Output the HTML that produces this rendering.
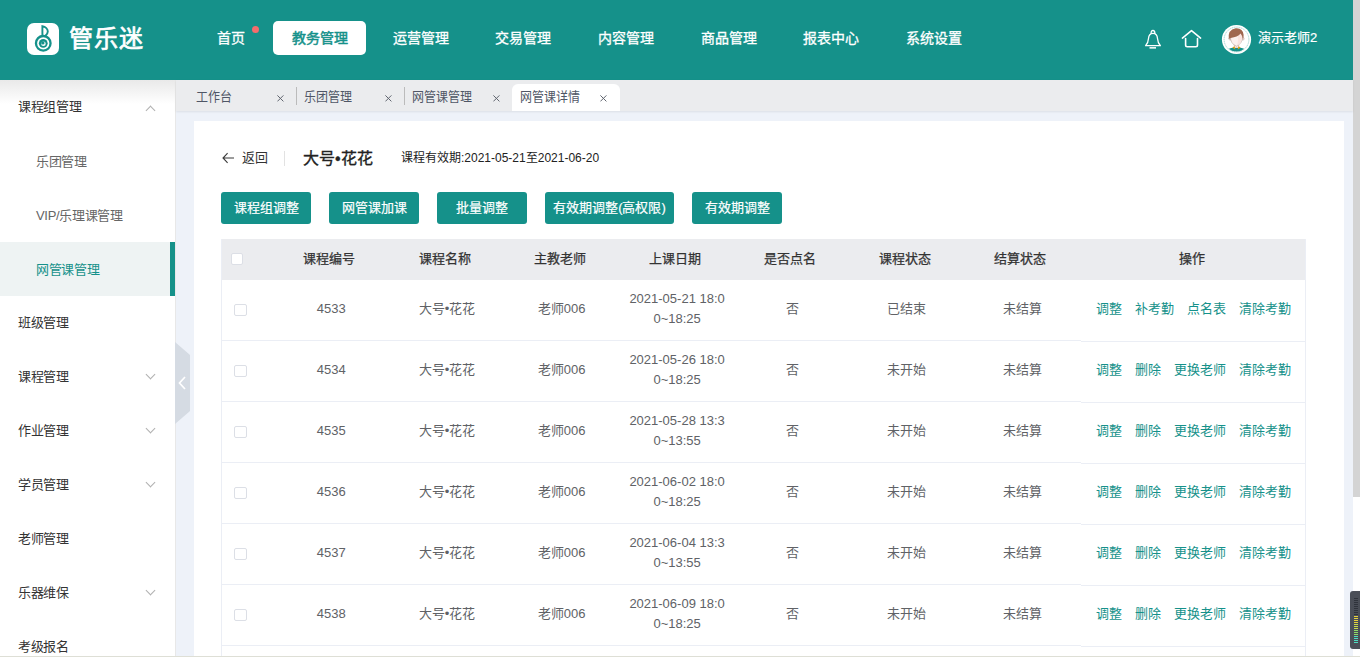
<!DOCTYPE html>
<html lang="zh-CN">
<head>
<meta charset="utf-8">
<style>
*{margin:0;padding:0;box-sizing:border-box}
html,body{width:1360px;height:657px;overflow:hidden}
body{position:relative;background:#eef2f9;font-family:"Liberation Sans",sans-serif;color:#333;font-size:13px}
.abs{position:absolute}
#hdr{left:0;top:0;width:1353px;height:80px;background:#15918a}
.logo{left:27px;top:23px;width:32px;height:32px;background:#fff;border-radius:7px}
.logo svg{position:absolute;left:0;top:0}
.brand{left:69px;top:23px;color:#fff;font-size:24px;letter-spacing:1px;line-height:32px;-webkit-text-stroke:.7px #fff}
.nav{top:21px;height:34px;line-height:34px;color:#fff;font-size:14px;font-weight:400;-webkit-text-stroke:.3px currentColor;white-space:nowrap}
.nav.act{background:#fff;color:#15918a;border-radius:5px;text-align:center;-webkit-text-stroke:.5px #15918a}
.dot{left:252px;top:26px;width:7px;height:7px;border-radius:50%;background:#f56c6c}
.uname{left:1258px;top:30px;color:#fff;font-size:13px;line-height:16px;-webkit-text-stroke:.2px #fff}
#sb{left:1353px;top:0;width:7px;height:497px;background:#d4d4d4}
#sbt{left:1353px;top:497px;width:7px;height:160px;background:#fff}
#widget{left:1350px;top:591px;width:14px;height:58px;background:#4a4e57;border-radius:3px}
#side{left:0;top:80px;width:176px;height:577px;background:#fff;border-right:1px solid #e8e8e8}
#side .shadow{left:0;top:0;width:175px;height:24px;background:linear-gradient(#e9e9e9,rgba(255,255,255,0))}
.mi{left:18px;font-size:13px;color:#333;line-height:16px;white-space:nowrap;letter-spacing:-.3px;margin-top:.5px}
.mi.sub{left:36px;color:#666}
.mi.on{color:#15918a}
.chev{left:147px;width:7px;height:7px;border-right:1px solid #b0b0b0;border-bottom:1px solid #b0b0b0;transform:rotate(45deg);margin-top:.5px}
.chev.up{transform:rotate(-135deg)}
#tabs{left:176px;top:80px;width:1177px;height:31px;background:#ebecee;box-shadow:0 1px 2px rgba(0,0,0,.08)}
.tab{top:0;height:31px;width:108px;font-size:12px;color:#4f5666;line-height:31px;white-space:nowrap}
.tab .t{position:absolute;left:8px;top:2px;transform:scaleY(1.08);transform-origin:50% 60%}
.tab .x{position:absolute;left:88.6px;top:14.6px}
.tab .sep{position:absolute;left:0;top:7px;width:1px;height:18px;background:#bbb}
.tab.act{top:4px;height:27px;background:#fff;border-radius:6px 6px 0 0}
.tab.act .t{top:-2px}
.tab.act .x{top:10.6px;left:87.6px}
#card{left:194px;top:121px;width:1150px;height:540px;background:#fff}
.back{left:242px;top:150px;font-size:13px;line-height:16px;color:#333}
.title{left:303px;top:148px;font-size:16px;line-height:22px;color:#222;-webkit-text-stroke:.35px #222}
.period{left:401px;top:150px;font-size:12px;line-height:16px;color:#222}
.btn{top:192px;height:32px;line-height:32px;background:#15918a;color:#fff;border-radius:3px;text-align:center;font-size:13px;white-space:nowrap;-webkit-text-stroke:.2px #fff}
#tbl{left:221px;top:239px;width:1085px;height:420px;border-left:1px solid #ebeef5;border-right:1px solid #ebeef5}
.th{left:0;top:0;width:1083px;height:41px;background:#ebecef}
.c{position:absolute;text-align:center;white-space:nowrap}
.hd{color:#333;line-height:18px;-webkit-text-stroke:.25px #333}
.rowb{left:0;width:859px;height:1px;background:#ebeef5}
.rowbf{left:859px;width:224px;height:1px;background:#ebeef5}
.cb{position:absolute;width:13px;height:12px;border:1px solid #dcdfe6;border-radius:2px;background:#fff}
.hcb{width:12px;height:12px}
.cell{color:#606266;line-height:20px}
.ops{color:#15918a;line-height:20px}
.ops span{margin:0 6.5px}

</style>
</head>
<body>
<div id="hdr" class="abs">
<div class="abs logo"><svg width="32" height="32" viewBox="0 0 32 32"><g fill="none" stroke="#15918a"><circle cx="16.25" cy="20.3" r="7.3" stroke-width="2.3"/><path d="M15.4 12.6 V3.2 C18.6 3.6 20.8 6 20.8 8.6 C20.8 10.4 19.8 11.8 18.4 12.7" stroke-width="1.9"/></g><circle cx="16.25" cy="20.3" r="4.4" fill="#15918a"/><circle cx="16.4" cy="20.8" r="2.3" fill="#fff"/><circle cx="15.85" cy="19.9" r="1.7" fill="#15918a"/></svg></div>
<div class="abs brand">管乐迷</div>
<div class="abs nav" style="left:217px">首页</div>
<div class="abs dot"></div>
<div class="abs nav act" style="left:273px;width:93px">教务管理</div>
<div class="abs nav" style="left:393px">运营管理</div>
<div class="abs nav" style="left:495px">交易管理</div>
<div class="abs nav" style="left:598px">内容管理</div>
<div class="abs nav" style="left:701px">商品管理</div>
<div class="abs nav" style="left:803px">报表中心</div>
<div class="abs nav" style="left:906px">系统设置</div>
<svg class="abs" style="left:1140px;top:28px" width="26" height="24" viewBox="0 0 26 24"><g fill="none" stroke="#fff" stroke-width="1.3" stroke-linejoin="round"><path d="M11.1 5.4 Q11.1 2.5 13 2.5 Q14.9 2.5 14.9 5.4"/><path d="M13 5.3 C9.8 5.3 8.7 7.5 8.5 10.5 C8.3 14 7.6 15.6 5.6 17.7 H20.4 C18.4 15.6 17.7 14 17.5 10.5 C17.3 7.5 16.2 5.3 13 5.3 Z"/></g><rect x="9.5" y="19.1" width="6.5" height="1.5" fill="#fff"/></svg>
<svg class="abs" style="left:1178px;top:27px" width="26" height="24" viewBox="0 0 26 24"><g fill="none" stroke="#fff" stroke-width="1.6" stroke-linejoin="round" stroke-linecap="round"><path d="M4.4 11.1 L13.5 3.6 L22.6 11.1"/><path d="M7.6 11.6 V18 Q7.6 19.7 9.3 19.7 H17.8 Q19.5 19.7 19.5 18 V11.6"/></g></svg>
<svg class="abs" style="left:1221px;top:24px" width="31" height="31" viewBox="0 0 31 31"><circle cx="15.5" cy="15.5" r="14.6" fill="#fff"/><circle cx="15.5" cy="15.5" r="12.4" fill="none" stroke="#6fbab3" stroke-width=".6" stroke-dasharray="1.3 .6"/><clipPath id="av"><circle cx="15.5" cy="15.5" r="12"/></clipPath><g clip-path="url(#av)"><path d="M4 31 Q5 24.6 11.5 23.8 L19.5 23.8 Q26 24.6 27 31 Z" fill="#15918a"/><path d="M13.3 18.5 V24 H17.7 V18.5 Z" fill="#fbe7e3" stroke="#8a6a60" stroke-width=".3"/><path d="M11.3 23.6 L13.5 22.2 L14.3 25.6 Z M19.7 23.6 L17.5 22.2 L16.7 25.6 Z" fill="#e0a010"/><circle cx="9.1" cy="14.8" r="1.3" fill="#fbe7e3" stroke="#8a6a60" stroke-width=".3"/><circle cx="21.9" cy="14.8" r="1.3" fill="#fbe7e3" stroke="#8a6a60" stroke-width=".3"/><path d="M9.4 12.5 Q9.2 19.6 15.4 22.2 Q21.6 19.6 21.4 12.5 Q21.3 7.5 15.4 7.5 Q9.5 7.5 9.4 12.5 Z" fill="#fdf0ee" stroke="#8a6a60" stroke-width=".35"/><path d="M15.4 8 Q21 8.5 21.2 13 Q21 19 15.6 22 Q18.5 16 15.4 8 Z" fill="#fbe3df"/><path d="M7.8 15 Q6.6 5.6 14.6 4.2 Q21.8 3.6 22.6 10.8 Q22.8 13 22 15.2 Q21.2 11.6 19.6 9.6 Q16.4 13.2 9.8 14 Q8.6 14.4 7.8 15 Z" fill="#a0674f"/></g></svg>
<div class="abs uname">演示老师2</div>
</div>
<div id="sb" class="abs"></div>
<div id="sbt" class="abs"></div>
<div id="widget" class="abs"><div class="abs" style="left:4px;top:7px;width:4px;height:1px;background:#2f333b"></div><div class="abs" style="left:4px;top:9px;width:4px;height:1px;background:#2f333b"></div><div class="abs" style="left:4px;top:11px;width:4px;height:1px;background:#2f333b"></div><div class="abs" style="left:4px;top:13px;width:4px;height:1px;background:#2f333b"></div><div class="abs" style="left:4px;top:15px;width:4px;height:1px;background:#2f333b"></div><div class="abs" style="left:4px;top:17px;width:4px;height:1px;background:#2f333b"></div><div class="abs" style="left:4px;top:19px;width:4px;height:1px;background:#2f333b"></div><div class="abs" style="left:4px;top:21px;width:4px;height:1px;background:#2f333b"></div><div class="abs" style="left:4px;top:23px;width:4px;height:1px;background:#2f333b"></div><div class="abs" style="left:4px;top:25px;width:4px;height:1px;background:#e8d33a"></div><div class="abs" style="left:4px;top:27px;width:4px;height:1px;background:#e8d33a"></div><div class="abs" style="left:4px;top:29px;width:4px;height:1px;background:#e8d33a"></div><div class="abs" style="left:4px;top:31px;width:4px;height:1px;background:#e8d33a"></div><div class="abs" style="left:4px;top:33px;width:4px;height:1px;background:#c9dc4a"></div><div class="abs" style="left:4px;top:35px;width:4px;height:1px;background:#c9dc4a"></div><div class="abs" style="left:4px;top:37px;width:4px;height:1px;background:#c9dc4a"></div><div class="abs" style="left:4px;top:39px;width:4px;height:1px;background:#8fdc66"></div><div class="abs" style="left:4px;top:41px;width:4px;height:1px;background:#8fdc66"></div><div class="abs" style="left:4px;top:43px;width:4px;height:1px;background:#8fdc66"></div><div class="abs" style="left:4px;top:45px;width:4px;height:1px;background:#4fdcc0"></div><div class="abs" style="left:4px;top:47px;width:4px;height:1px;background:#4fdcc0"></div><div class="abs" style="left:4px;top:49px;width:4px;height:1px;background:#4fdcc0"></div><div class="abs" style="left:4px;top:51px;width:4px;height:1px;background:#4fdcc0"></div></div>
<div id="side" class="abs"><div class="abs shadow"></div>
<div class="abs mi top" style="top:18px">课程组管理</div><div class="abs chev up" style="top:26px"></div>
<div class="abs mi sub" style="top:73px">乐团管理</div>
<div class="abs mi sub" style="top:127px">VIP/乐理课管理</div>
<div class="abs" style="left:0;top:162px;width:175px;height:54px;background:#eef3f3"></div><div class="abs" style="left:170px;top:162px;width:5px;height:54px;background:#15918a"></div><div class="abs mi sub on" style="top:181px">网管课管理</div>
<div class="abs mi top" style="top:234px">班级管理</div>
<div class="abs mi top" style="top:288px">课程管理</div><div class="abs chev" style="top:290px"></div>
<div class="abs mi top" style="top:342px">作业管理</div><div class="abs chev" style="top:344px"></div>
<div class="abs mi top" style="top:396px">学员管理</div><div class="abs chev" style="top:398px"></div>
<div class="abs mi top" style="top:450px">老师管理</div>
<div class="abs mi top" style="top:504px">乐器维保</div><div class="abs chev" style="top:506px"></div>
<div class="abs mi top" style="top:558px">考级报名</div>
</div>
<svg class="abs" style="left:175px;top:342px" width="16" height="83" viewBox="0 0 16 83"><path d="M0 0 L15 13 V69 L0 82 Z" fill="#d5dbe3"/><path d="M10 35 L4.5 41 L10 47" fill="none" stroke="#fff" stroke-width="1.7"/></svg>
<div id="tabs" class="abs">
<div class="abs tab" style="left:12px"><span class="t">工作台</span><svg class="x" width="7" height="7" viewBox="0 0 7 7"><path d="M.4 .4 L6.4 6.4 M6.4 .4 L.4 6.4" stroke="#60656f" stroke-width="1"/></svg></div>
<div class="abs tab" style="left:120px"><span class="sep"></span><span class="t">乐团管理</span><svg class="x" width="7" height="7" viewBox="0 0 7 7"><path d="M.4 .4 L6.4 6.4 M6.4 .4 L.4 6.4" stroke="#60656f" stroke-width="1"/></svg></div>
<div class="abs tab" style="left:228px"><span class="sep"></span><span class="t">网管课管理</span><svg class="x" width="7" height="7" viewBox="0 0 7 7"><path d="M.4 .4 L6.4 6.4 M6.4 .4 L.4 6.4" stroke="#60656f" stroke-width="1"/></svg></div>
<div class="abs tab act" style="left:336px"><span class="t">网管课详情</span><svg class="x" width="7" height="7" viewBox="0 0 7 7"><path d="M.4 .4 L6.4 6.4 M6.4 .4 L.4 6.4" stroke="#60656f" stroke-width="1"/></svg></div>
</div>
<div id="card" class="abs"></div>
<svg class="abs" style="left:221px;top:151px" width="14" height="14" viewBox="0 0 14 14"><path d="M13 7 H2.2 M6.6 2.2 L2 7 L6.6 11.8" fill="none" stroke="#3a3a3a" stroke-width="1.1"/></svg>
<div class="abs back">返回</div>
<div class="abs" style="left:284px;top:151px;width:1px;height:15px;background:#e2e2e2"></div>
<div class="abs title">大号•花花</div>
<div class="abs period">课程有效期:2021-05-21至2021-06-20</div>
<div class="abs btn" style="left:221px;width:90px">课程组调整</div>
<div class="abs btn" style="left:329px;width:90px">网管课加课</div>
<div class="abs btn" style="left:437px;width:90px">批量调整</div>
<div class="abs btn" style="left:545px;width:129px">有效期调整(高权限)</div>
<div class="abs btn" style="left:692px;width:90px">有效期调整</div>
<div id="tbl" class="abs">
<div class="abs th"></div>
<div class="abs cb hcb" style="left:9px;top:14px"></div>
<div class="c hd" style="left:47.2px;width:120px;top:11px">课程编号</div>
<div class="c hd" style="left:162.8px;width:120px;top:11px">课程名称</div>
<div class="c hd" style="left:278.2px;width:120px;top:11px">主教老师</div>
<div class="c hd" style="left:392.5px;width:120px;top:11px">上课日期</div>
<div class="c hd" style="left:508.2px;width:120px;top:11px">是否点名</div>
<div class="c hd" style="left:622.6px;width:120px;top:11px">课程状态</div>
<div class="c hd" style="left:738.1px;width:120px;top:11px">结算状态</div>
<div class="c hd" style="left:910.2px;width:120px;top:11px">操作</div>
<div class="abs rowb" style="top:101px"></div><div class="abs rowbf" style="top:102px"></div><div class="abs cb" style="left:12px;top:65px"></div><div class="c cell" style="left:49.2px;width:120px;top:60px">4533</div><div class="c cell" style="left:165.1px;width:120px;top:60px">大号•花花</div><div class="c cell" style="left:279.6px;width:120px;top:60px">老师006</div><div class="c cell" style="left:385.1px;width:140px;top:50px">2021-05-21 18:0<br>0~18:25</div><div class="c cell" style="left:510.0px;width:120px;top:60px">否</div><div class="c cell" style="left:624.8px;width:120px;top:60px">已结束</div><div class="c cell" style="left:740.0px;width:120px;top:60px">未结算</div><div class="c ops" style="left:858.5px;width:225px;top:60px"><span>调整</span><span>补考勤</span><span>点名表</span><span>清除考勤</span></div>
<div class="abs rowb" style="top:162px"></div><div class="abs rowbf" style="top:163px"></div><div class="abs cb" style="left:12px;top:126px"></div><div class="c cell" style="left:49.2px;width:120px;top:121px">4534</div><div class="c cell" style="left:165.1px;width:120px;top:121px">大号•花花</div><div class="c cell" style="left:279.6px;width:120px;top:121px">老师006</div><div class="c cell" style="left:385.1px;width:140px;top:111px">2021-05-26 18:0<br>0~18:25</div><div class="c cell" style="left:510.0px;width:120px;top:121px">否</div><div class="c cell" style="left:624.8px;width:120px;top:121px">未开始</div><div class="c cell" style="left:740.0px;width:120px;top:121px">未结算</div><div class="c ops" style="left:858.5px;width:225px;top:121px"><span>调整</span><span>删除</span><span>更换老师</span><span>清除考勤</span></div>
<div class="abs rowb" style="top:223px"></div><div class="abs rowbf" style="top:224px"></div><div class="abs cb" style="left:12px;top:187px"></div><div class="c cell" style="left:49.2px;width:120px;top:182px">4535</div><div class="c cell" style="left:165.1px;width:120px;top:182px">大号•花花</div><div class="c cell" style="left:279.6px;width:120px;top:182px">老师006</div><div class="c cell" style="left:385.1px;width:140px;top:172px">2021-05-28 13:3<br>0~13:55</div><div class="c cell" style="left:510.0px;width:120px;top:182px">否</div><div class="c cell" style="left:624.8px;width:120px;top:182px">未开始</div><div class="c cell" style="left:740.0px;width:120px;top:182px">未结算</div><div class="c ops" style="left:858.5px;width:225px;top:182px"><span>调整</span><span>删除</span><span>更换老师</span><span>清除考勤</span></div>
<div class="abs rowb" style="top:284px"></div><div class="abs rowbf" style="top:285px"></div><div class="abs cb" style="left:12px;top:248px"></div><div class="c cell" style="left:49.2px;width:120px;top:243px">4536</div><div class="c cell" style="left:165.1px;width:120px;top:243px">大号•花花</div><div class="c cell" style="left:279.6px;width:120px;top:243px">老师006</div><div class="c cell" style="left:385.1px;width:140px;top:233px">2021-06-02 18:0<br>0~18:25</div><div class="c cell" style="left:510.0px;width:120px;top:243px">否</div><div class="c cell" style="left:624.8px;width:120px;top:243px">未开始</div><div class="c cell" style="left:740.0px;width:120px;top:243px">未结算</div><div class="c ops" style="left:858.5px;width:225px;top:243px"><span>调整</span><span>删除</span><span>更换老师</span><span>清除考勤</span></div>
<div class="abs rowb" style="top:345px"></div><div class="abs rowbf" style="top:346px"></div><div class="abs cb" style="left:12px;top:309px"></div><div class="c cell" style="left:49.2px;width:120px;top:304px">4537</div><div class="c cell" style="left:165.1px;width:120px;top:304px">大号•花花</div><div class="c cell" style="left:279.6px;width:120px;top:304px">老师006</div><div class="c cell" style="left:385.1px;width:140px;top:294px">2021-06-04 13:3<br>0~13:55</div><div class="c cell" style="left:510.0px;width:120px;top:304px">否</div><div class="c cell" style="left:624.8px;width:120px;top:304px">未开始</div><div class="c cell" style="left:740.0px;width:120px;top:304px">未结算</div><div class="c ops" style="left:858.5px;width:225px;top:304px"><span>调整</span><span>删除</span><span>更换老师</span><span>清除考勤</span></div>
<div class="abs rowb" style="top:406px"></div><div class="abs rowbf" style="top:407px"></div><div class="abs cb" style="left:12px;top:370px"></div><div class="c cell" style="left:49.2px;width:120px;top:365px">4538</div><div class="c cell" style="left:165.1px;width:120px;top:365px">大号•花花</div><div class="c cell" style="left:279.6px;width:120px;top:365px">老师006</div><div class="c cell" style="left:385.1px;width:140px;top:355px">2021-06-09 18:0<br>0~18:25</div><div class="c cell" style="left:510.0px;width:120px;top:365px">否</div><div class="c cell" style="left:624.8px;width:120px;top:365px">未开始</div><div class="c cell" style="left:740.0px;width:120px;top:365px">未结算</div><div class="c ops" style="left:858.5px;width:225px;top:365px"><span>调整</span><span>删除</span><span>更换老师</span><span>清除考勤</span></div>
<div class="abs rowb" style="top:467px"></div></div>
<div class="abs" style="left:0;top:656px;width:1360px;height:1px;background:#dedfd6"></div>
</body>
</html>
